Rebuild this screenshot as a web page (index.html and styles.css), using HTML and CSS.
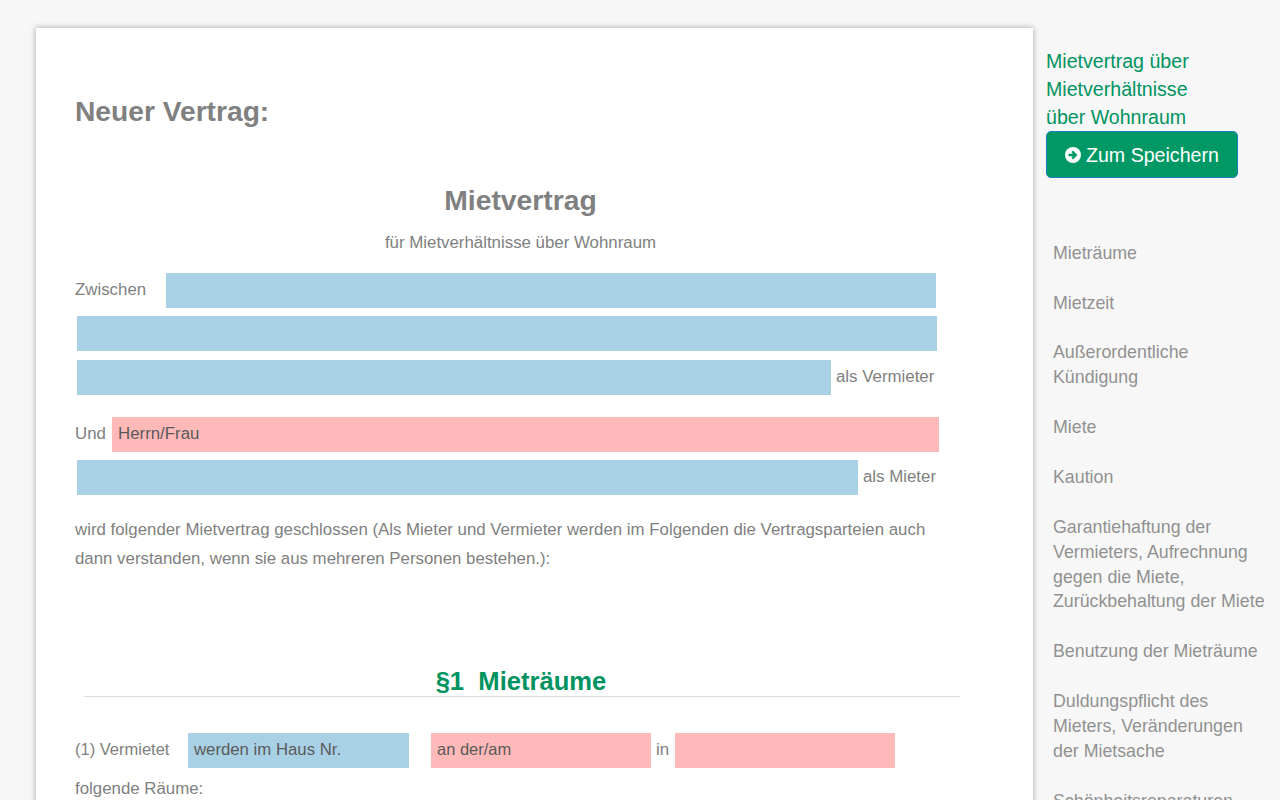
FILE: index.html
```html
<!DOCTYPE html>
<html lang="de">
<head>
<meta charset="utf-8">
<title>Neuer Vertrag</title>
<link rel="stylesheet" href="styles.css">
</head>
<body>
<div class="page">
  <main class="paper">
    <h1 class="title">Neuer Vertrag:</h1>
    <h2 class="doc-title">Mietvertrag</h2>
    <p class="doc-sub">für Mietverhältnisse über Wohnraum</p>
    <div class="row row-1"><span class="lbl-zw">Zwischen</span><div class="field blue f1"></div></div>
    <div class="row row-2"><div class="field blue f2"></div></div>
    <div class="row row-3"><div class="field blue f3"></div><span class="after">als Vermieter</span></div>
    <div class="row row-4"><span class="lbl-und">Und</span><div class="field pink f4">Herrn/Frau</div></div>
    <div class="row row-5"><div class="field blue f5"></div><span class="after">als Mieter</span></div>
    <p class="para">wird folgender Mietvertrag geschlossen (Als Mieter und Vermieter werden im Folgenden die Vertragsparteien auch dann verstanden, wenn sie aus mehreren Personen bestehen.):</p>
    <h3 class="section">§1&nbsp; Mieträume</h3>
    <div class="row row-6"><span class="lbl-verm">(1) Vermietet</span><div class="field blue f6">werden im Haus Nr.</div><div class="field pink f7">an der/am</div><span class="lbl-in">in</span><div class="field pink f8"></div></div>
    <p class="last">folgende Räume:</p>
  </main>
  <aside class="side">
    <div class="side-title">Mietvertrag über<br>Mietverhältnisse<br>über Wohnraum</div>
    <a class="save" href="#"><svg class="save-icon" viewBox="0 0 16 16" width="16" height="16"><circle cx="8" cy="8" r="8" fill="#fff"/><path d="M3.500 8h7M7.200 4.400 10.800 8l-3.600 3.600" fill="none" stroke="#009966" stroke-width="2.300"/></svg>Zum Speichern</a>
    <nav class="toc">
      <a href="#">Mieträume</a>
      <a href="#">Mietzeit</a>
      <a href="#">Außerordentliche Kündigung</a>
      <a href="#">Miete</a>
      <a href="#">Kaution</a>
      <a href="#">Garantiehaftung der Vermieters, Aufrechnung gegen die Miete, Zurückbehaltung der Miete</a>
      <a href="#">Benutzung der Mieträume</a>
      <a href="#">Duldungspflicht des Mieters, Veränderungen der Mietsache</a>
      <a href="#">Schönheitsreparaturen</a>
    </nav>
  </aside>
</div>
</body>
</html>
```
FILE: styles.css
```css
html, body { margin: 0; padding: 0; height: 800px; overflow: hidden; }
body { background: #f7f7f7; color: #808080; font-family: "Liberation Sans", Arial, sans-serif; font-size: 16.850px; }
.page { display: flex; align-items: flex-start; padding: 28px 0 0 36px; }
.paper { box-sizing: border-box; flex: 0 0 997px; width: 997px; height: 1200px; padding: 65px 39px 0; background: #fff; box-shadow: 0 0 6px rgba(0,0,0,.35); }
.title { margin: 0; font-size: 28.200px; line-height: 36px; font-weight: 700; color: #808080; }
.doc-title { margin: 53px 0 0; font-size: 28.300px; line-height: 36px; font-weight: 700; text-align: center; color: #808080; width: 891px; }
.doc-sub { margin: 13px 0 0; line-height: 24px; text-align: center; width: 891px; }
.row { display: flex; align-items: center; height: 35px; white-space: nowrap; }
.row-1 { margin-top: 18px; }
.field { box-sizing: border-box; height: 100%; padding-left: 6px; line-height: 33px; color: #5a5a5a; }
.blue { background: #a9d1e5; }
.pink { background: #ffb9b9; }
.row > span { padding-bottom: 2px; }
.row-1 .lbl-zw { width: 91px; }
.f1 { width: 770px; }
.row-2 { margin: 8px 0 0 2px; }
.f2 { width: 860px; }
.row-3 { margin: 9px 0 0 2px; }
.f3 { width: 754px; }
.after { margin-left: 5px; }
.row-4 { margin-top: 22px; }
.lbl-und { width: 37px; }
.f4 { width: 827px; }
.row-5 { margin: 8px 0 0 2px; }
.f5 { width: 781px; }
.para { margin: 20px 0 0; width: 862px; font-size: 16.830px; line-height: 29px; }
.section { margin: 94px 0 0 9px; width: 874px; padding-right: 2px; height: 29px; border-bottom: 1px solid #ddd; font-size: 25.600px; line-height: 28px; font-weight: 700; color: #00935f; text-align: center; }
.row-6 { margin-top: 36px; }
.lbl-verm { width: 113px; font-size: 16.500px; }
.f6 { width: 221px; font-size: 16.750px; }
.f7 { margin-left: 22px; width: 220px; font-size: 16.500px; }
.lbl-in { margin-left: 5px; width: 19px; }
.f8 { width: 220px; }
.last { margin: 9px 0 0; line-height: 24px; }
.side { flex: 0 0 234px; margin-left: 13px; padding-top: 19px; }
.side-title { width: 170px; color: #00935f; font-size: 19.600px; line-height: 28px; }
.save { display: flex; align-items: center; box-sizing: border-box; width: 192px; height: 47px; padding: 1px 0 0 18px; border-radius: 5px; border: 1px solid #1a7fb8; background: #009966; color: #fff; font-size: 19.600px; text-decoration: none; white-space: nowrap; }
.save-icon { margin-right: 5px; flex: none; }
.toc { display: flex; flex-direction: column; gap: 24.900px; margin: 62.800px 0 0 7px; width: 215px; }
.toc a { color: #919191; font-size: 17.800px; line-height: 24.900px; text-decoration: none; }
```
